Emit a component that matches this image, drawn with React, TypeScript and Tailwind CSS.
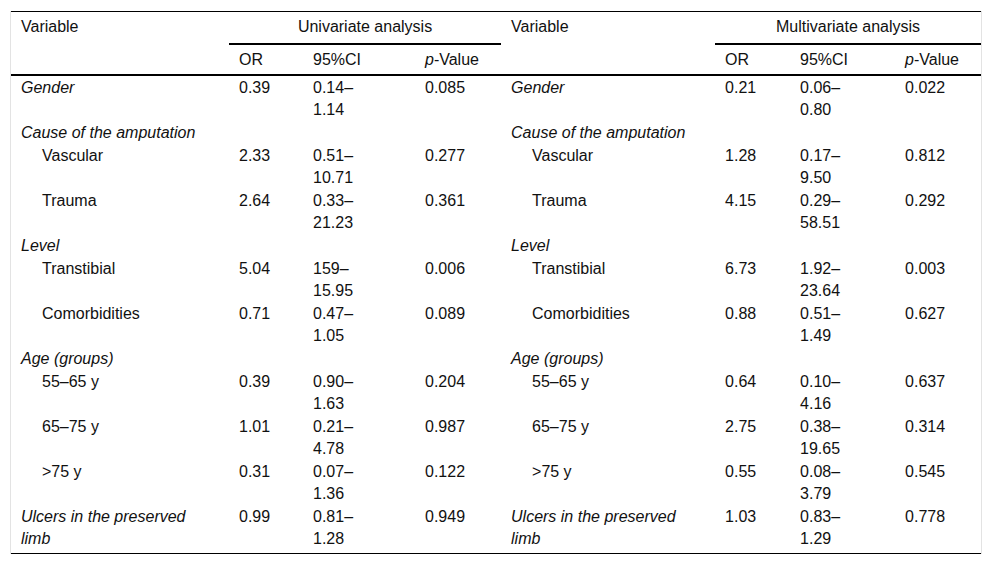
type Stat = [string, string, string, string];

type Row = {
  label: string;
  label2?: string;
  kind: "group" | "item";
  uni?: Stat;
  multi?: Stat;
};

const rows: Row[] = [
  { label: "Gender", kind: "group", uni: ["0.39", "0.14–", "1.14", "0.085"], multi: ["0.21", "0.06–", "0.80", "0.022"] },
  { label: "Cause of the amputation", kind: "group" },
  { label: "Vascular", kind: "item", uni: ["2.33", "0.51–", "10.71", "0.277"], multi: ["1.28", "0.17–", "9.50", "0.812"] },
  { label: "Trauma", kind: "item", uni: ["2.64", "0.33–", "21.23", "0.361"], multi: ["4.15", "0.29–", "58.51", "0.292"] },
  { label: "Level", kind: "group" },
  { label: "Transtibial", kind: "item", uni: ["5.04", "159–", "15.95", "0.006"], multi: ["6.73", "1.92–", "23.64", "0.003"] },
  { label: "Comorbidities", kind: "item", uni: ["0.71", "0.47–", "1.05", "0.089"], multi: ["0.88", "0.51–", "1.49", "0.627"] },
  { label: "Age (groups)", kind: "group" },
  { label: "55–65 y", kind: "item", uni: ["0.39", "0.90–", "1.63", "0.204"], multi: ["0.64", "0.10–", "4.16", "0.637"] },
  { label: "65–75 y", kind: "item", uni: ["1.01", "0.21–", "4.78", "0.987"], multi: ["2.75", "0.38–", "19.65", "0.314"] },
  { label: ">75 y", kind: "item", uni: ["0.31", "0.07–", "1.36", "0.122"], multi: ["0.55", "0.08–", "3.79", "0.545"] },
  { label: "Ulcers in the preserved", label2: "limb", kind: "group", uni: ["0.99", "0.81–", "1.28", "0.949"], multi: ["1.03", "0.83–", "1.29", "0.778"] },
];

function Label({ row, last }: { row: Row; last: boolean }) {
  const pad = last ? "pb-[3px]" : "";
  return (
    <td className={`pt-px align-top ${pad} ${row.kind === "group" ? "pl-[10px] italic" : "pl-[31px]"} pr-[10px]`}>
      {row.label}
      {row.label2 && (
        <>
          <br />
          {row.label2}
        </>
      )}
    </td>
  );
}

function Stats({ s, last }: { s?: Stat; last: boolean }) {
  const cell = `pt-px px-[10px] align-top ${last ? "pb-[3px]" : ""}`;
  if (!s) {
    return (
      <>
        <td className={cell} />
        <td className={cell} />
        <td className={cell} />
      </>
    );
  }
  return (
    <>
      <td className={cell}>{s[0]}</td>
      <td className={cell}>
        {s[1]}
        <br />
        {s[2]}
      </td>
      <td className={cell}>{s[3]}</td>
    </>
  );
}

export default function App() {
  const th = "font-normal text-left px-[10px] align-top";
  const sub = `${th} pt-1 pb-[3px] border-b-2 border-black`;
  return (
    <div className="bg-white px-[10px] pt-[11px] font-['Liberation_Sans',Arial,sans-serif] text-[16px] leading-[22px] text-[#111]">
      <div className="border-x border-[#e3e3e3]">
        <table className="w-full table-fixed border-separate border-spacing-0 border-t border-b border-black">
          <colgroup>
            <col className="w-[218px]" />
            <col className="w-[74px]" />
            <col className="w-[112px]" />
            <col className="w-[86px]" />
            <col className="w-[214px]" />
            <col className="w-[75px]" />
            <col className="w-[105px]" />
            <col />
          </colgroup>
          <thead>
            <tr>
              <th rowSpan={2} className={`${th} pt-1 border-b-2 border-black`}>
                Variable
              </th>
              <th colSpan={3} className="font-normal text-center pt-1 pb-[5px] border-b-2 border-black">
                Univariate analysis
              </th>
              <th rowSpan={2} className={`${th} pt-1 border-b-2 border-black`}>
                Variable
              </th>
              <th colSpan={3} className="font-normal text-center pt-1 pb-[5px] border-b-2 border-black">
                Multivariate analysis
              </th>
            </tr>
            <tr>
              <th className={sub}>OR</th>
              <th className={sub}>95%CI</th>
              <th className={sub}>
                <i>p</i>-Value
              </th>
              <th className={sub}>OR</th>
              <th className={sub}>95%CI</th>
              <th className={sub}>
                <i>p</i>-Value
              </th>
            </tr>
          </thead>
          <tbody>
            {rows.map((r, i) => {
              const last = i === rows.length - 1;
              return (
                <tr key={i}>
                  <Label row={r} last={last} />
                  <Stats s={r.uni} last={last} />
                  <Label row={r} last={last} />
                  <Stats s={r.multi} last={last} />
                </tr>
              );
            })}
          </tbody>
        </table>
      </div>
    </div>
  );
}
